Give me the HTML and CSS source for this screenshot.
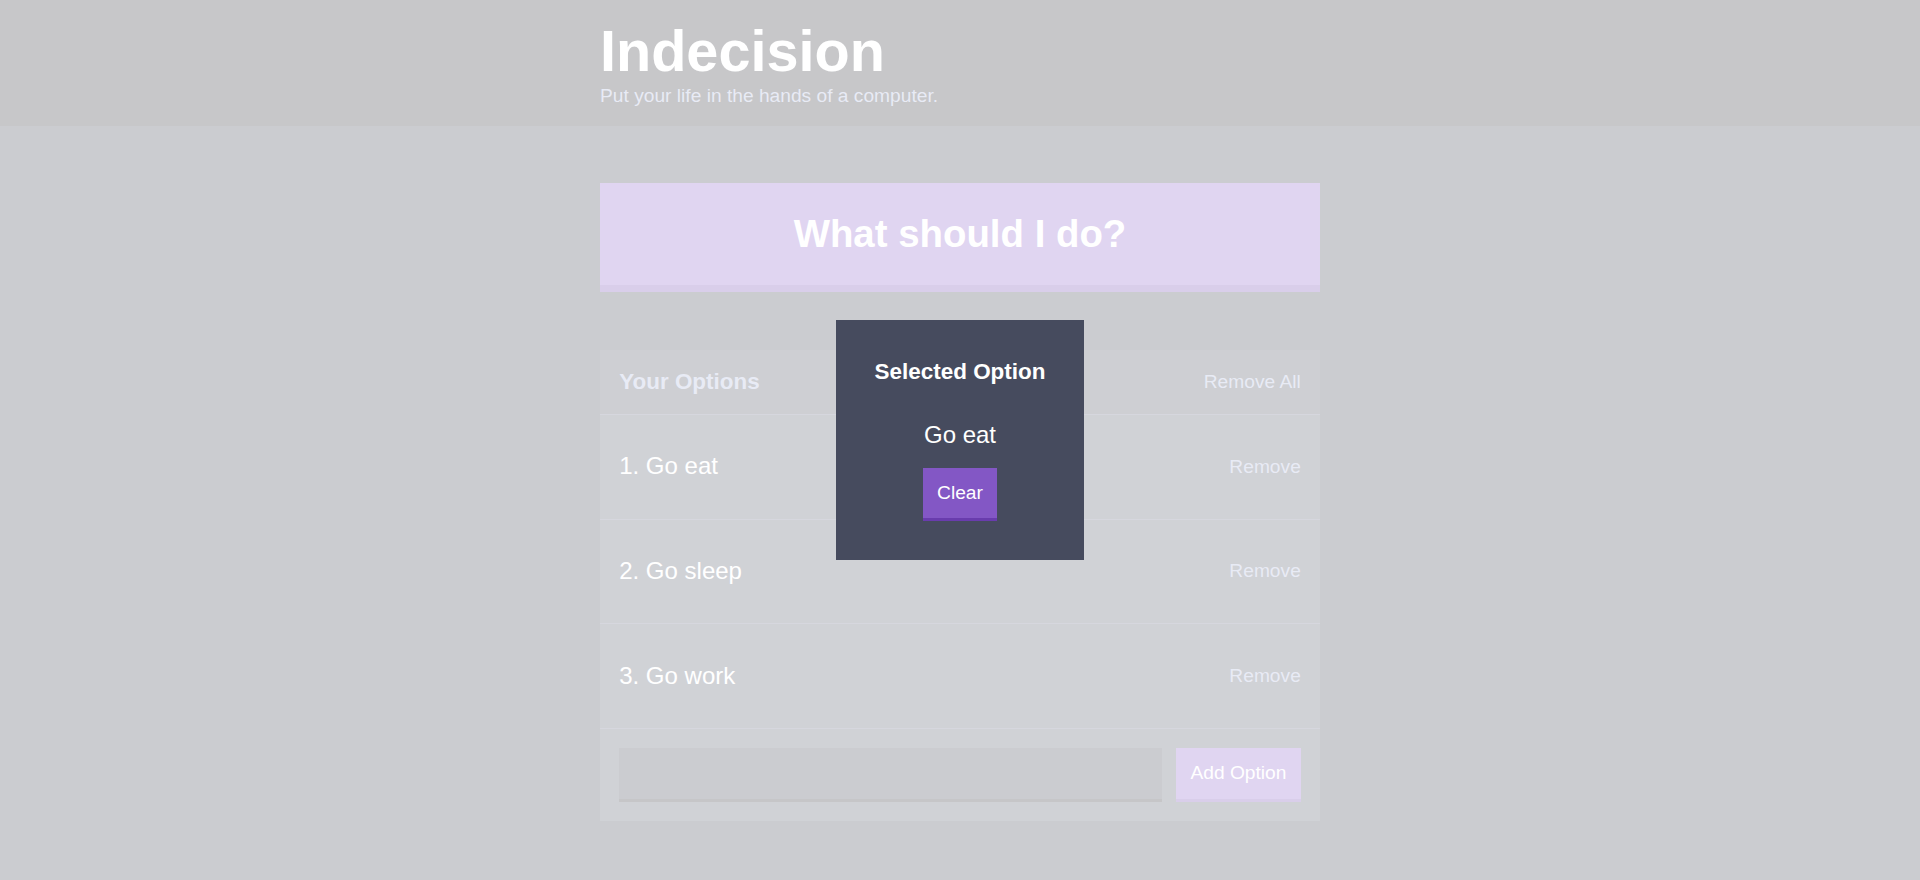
FILE: index.html
```html
<!DOCTYPE html>
<html lang="en">
<head>
<meta charset="utf-8">
<title>Indecision</title>
<link rel="stylesheet" href="styles.css">
</head>
<body>
  <header class="header">
    <div class="container">
      <h1 class="header__title">Indecision</h1>
      <h2 class="header__subtitle">Put your life in the hands of a computer.</h2>
    </div>
  </header>
  <main class="container">
    <button class="big-button">What should I do?</button>
    <section class="widget">
      <div class="widget-header">
        <h3 class="widget-header__title">Your Options</h3>
        <button class="button--link">Remove All</button>
      </div>
      <div class="option">
        <p class="option__text">1. Go eat</p>
        <button class="button--link">Remove</button>
      </div>
      <div class="option">
        <p class="option__text">2. Go sleep</p>
        <button class="button--link">Remove</button>
      </div>
      <div class="option">
        <p class="option__text">3. Go work</p>
        <button class="button--link">Remove</button>
      </div>
      <form class="add-option">
        <input class="add-option__input" type="text" name="option">
        <button class="button" type="button">Add Option</button>
      </form>
    </section>
  </main>
  <div class="modal-overlay">
    <div class="modal">
      <h3 class="modal__title">Selected Option</h3>
      <p class="modal__body">Go eat</p>
      <button class="button">Clear</button>
    </div>
  </div>
</body>
</html>
```
FILE: styles.css
```css
* { box-sizing: border-box; }

html, body { height: 100%; }

body {
  margin: 0;
  background: #333745;
  color: #ffffff;
  font-family: "Liberation Sans", Arial, Helvetica, sans-serif;
  font-size: 19.2px;
  overflow: hidden;
}

button, input { font-family: inherit; }

.container {
  max-width: 720px;
  margin: 0 auto;
}

.header {
  background: #20222b;
  padding: 19.2px 0;
  margin-bottom: 57.6px;
}

.header__title {
  margin: 0;
  font-size: 57.6px;
  line-height: 65.5px;
  font-weight: bold;
  color: #ffffff;
}

.header__subtitle {
  margin: 0;
  font-size: 19.2px;
  font-weight: normal;
  line-height: 22px;
  color: #a5afd7;
}

.big-button {
  display: block;
  width: 100%;
  background: #8357c5;
  border: none;
  border-bottom: 7.2px solid #693cad;
  color: #ffffff;
  font-weight: bold;
  font-size: 38.4px;
  padding: 28.8px;
  margin: 0 0 57.6px;
  cursor: pointer;
}

.widget {
  background: #464b5e;
  margin-bottom: 38.4px;
}

.widget-header {
  background: #3c4251;
  color: #a5afd7;
  display: flex;
  justify-content: space-between;
  align-items: center;
  padding: 19.2px;
  border-bottom: 1px solid #5c627b;
}

.widget-header__title {
  margin: 0;
  font-size: 22.46px;
  line-height: 26px;
  font-weight: bold;
}

.button--link {
  background: none;
  border: none;
  color: #a5afd7;
  padding: 0;
  font-size: 19.2px;
  cursor: pointer;
}

.option {
  display: flex;
  justify-content: space-between;
  align-items: center;
  padding: 38.4px 19.2px;
  border-bottom: 1px solid #5c627b;
}

.option__text {
  margin: 0;
  font-size: 24px;
  line-height: 26.8px;
  color: #ffffff;
}

.add-option {
  display: flex;
  margin: 0;
  padding: 19.2px;
}

.add-option__input {
  flex-grow: 1;
  background: #333745;
  border: none;
  border-bottom: 3.6px solid #1d1f27;
  color: #a5afd7;
  margin-right: 14.4px;
  padding: 14.4px;
  font-size: 19.2px;
  outline: none;
}

.button {
  background: #8357c5;
  border: none;
  border-bottom: 3.6px solid #693cad;
  color: #ffffff;
  font-size: 19.2px;
  font-weight: 500;
  padding: 14.4px;
  cursor: pointer;
}

.modal-overlay {
  position: fixed;
  inset: 0;
  background: rgba(255, 255, 255, 0.75);
  display: flex;
  align-items: center;
  justify-content: center;
}

.modal {
  background: #464b5e;
  color: #ffffff;
  max-width: 360px;
  padding: 38.4px;
  text-align: center;
}

.modal__title {
  margin: 0 0 36px;
  font-size: 22.46px;
  font-weight: bold;
}

.modal__body {
  margin: 0 0 19.2px;
  font-size: 24px;
  font-weight: 300;
}
```
